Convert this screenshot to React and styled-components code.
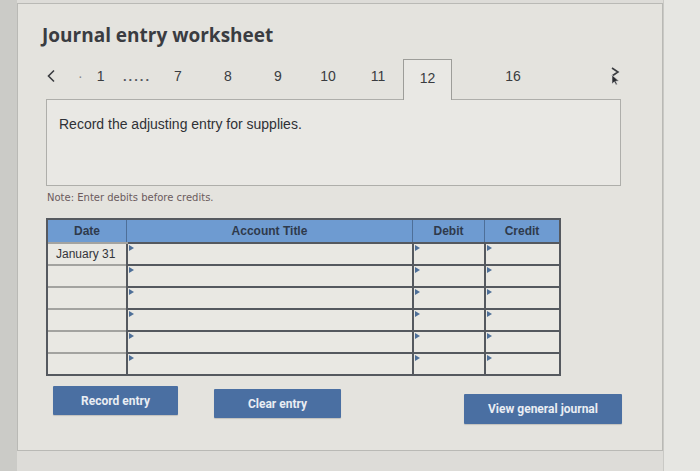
import React from "react";
import styled, { createGlobalStyle } from "styled-components";

const Global = createGlobalStyle`
  html, body { margin: 0; padding: 0; background: #dcdcd8; }
  #root { width: 700px; height: 471px; overflow: hidden; }
`;

const Page = styled.div`
  display: flex;
  width: 700px;
  height: 471px;
  background: #dddcd8;
`;

const LeftStrip = styled.div`
  width: 17px;
  background: #cbcbc7;
  flex-shrink: 0;
`;

const Panel = styled.div`
  width: 646px;
  height: 448px;
  margin-top: 3px;
  box-sizing: border-box;
  border: 1px solid #b9b9b5;
  background: #e4e3de;
  padding: 18px 0 0 24px;
  display: flex;
  flex-direction: column;
  font-family: "Liberation Sans", Arial, sans-serif;
  color: #33353a;
`;

const RightArea = styled.div`
  flex: 1;
  background: #e6e6e2;
  border-left: 1px solid #c9c9c5;
`;

const Title = styled.h1`
  margin: 0;
  font-family: "Open Sans", "DejaVu Sans", sans-serif;
  font-weight: 700;
  font-size: 19px;
  line-height: 26px;
  color: #3a3c41;
`;

const Tabs = styled.div`
  display: flex;
  align-items: stretch;
  height: 40px;
  margin: 11px 0 0 4px;
  width: 575px;
  position: relative;
  z-index: 1;
`;

const Tab = styled.div`
  width: ${(p) => p.$w}px;
  display: flex;
  align-items: center;
  justify-content: ${(p) => p.$justify || "center"};
  padding-bottom: 6px;
  font-size: 14px;
  color: #3a3c40;
  box-sizing: border-box;
  ${(p) =>
    p.$active &&
    `
    border: 1px solid #9d9d99;
    border-bottom: none;
    background: #e9e8e4;
    height: 41px;
    margin-bottom: -1px;
    padding-bottom: 5px;
  `}
`;

const Dots = styled.span`
  letter-spacing: 2px;
  font-weight: 700;
  font-size: 13px;
  color: #55585e;
`;

const Spaced = styled.span`
  display: flex;
  gap: 14px;
  align-items: center;
  padding-left: 12px;
`;

const Box = styled.div`
  width: 575px;
  height: 87px;
  margin-left: 4px;
  box-sizing: border-box;
  border: 1px solid #aeaeaa;
  background: #e9e8e4;
  padding: 16px 12px;
  font-size: 14px;
  color: #2f3136;
`;

const Note = styled.div`
  margin: 6px 0 0 5px;
  font-family: "DejaVu Sans", Verdana, sans-serif;
  font-size: 10px;
  color: #6b5b5d;
`;

const Table = styled.table`
  margin: 15px 0 0 4px;
  border-collapse: collapse;
  width: 515px;
  table-layout: fixed;
  border: 2px solid #55595f;
`;

const Th = styled.th`
  width: ${(p) => p.$w}px;
  height: 22px;
  padding: 0;
  background: #6e9bd1;
  border: 1px solid #4e6f98;
  font-size: 12px;
  font-weight: 700;
  color: #2e3a4c;
`;

const Td = styled.td`
  position: relative;
  height: 20px;
  padding: 0 0 0 8px;
  background: #e9e8e3;
  border-top: 2px solid ${(p) => (p.$date ? "#a3a3a0" : "#55595f")};
  border-left: 2px solid #55595f;
  font-size: 12px;
  color: #33353a;
  ${(p) =>
    p.$flag &&
    `
    &::before {
      content: "";
      position: absolute;
      left: 1px;
      top: 1px;
      border-left: 5px solid #4e6f98;
      border-top: 3px solid transparent;
      border-bottom: 3px solid transparent;
    }
  `}
`;

const Buttons = styled.div`
  display: flex;
  align-items: flex-start;
  margin: 10px 0 0 11px;
`;

const Button = styled.button`
  width: ${(p) => p.$w}px;
  height: ${(p) => p.$h || 29}px;
  margin-left: ${(p) => p.$ml || 0}px;
  margin-top: ${(p) => p.$mt || 0}px;
  border: none;
  border-radius: 1px;
  background: #4a6fa2;
  color: #e9edf3;
  font-family: Roboto, "Liberation Sans", sans-serif;
  font-weight: 700;
  font-size: 12px;
  padding: 0;
  box-shadow: 0 1px 1px rgba(0,0,0,0.15);
`;

const rows = ["January 31", "", "", "", "", ""];

export default function App() {
  return (
    <>
      <Global />
      <Page>
        <LeftStrip />
        <Panel>
          <Title>Journal entry worksheet</Title>
          <Tabs>
            <Tab $w={20} $justify="flex-start">
              <svg width="10" height="14" viewBox="0 0 10 14">
                <path d="M8 1.5 L2.5 7 L8 12.5" fill="none" stroke="#3a3c40" strokeWidth="1.6" />
              </svg>
            </Tab>
            <Tab $w={55} $justify="flex-start">
              <Spaced>
                <span style={{ color: "#888" }}>·</span>
                <span>1</span>
              </Spaced>
            </Tab>
            <Tab $w={32}>
              <Dots>.....</Dots>
            </Tab>
            {["7", "8", "9", "10", "11"].map((n) => (
              <Tab key={n} $w={50}>{n}</Tab>
            ))}
            <Tab $w={49} $active>12</Tab>
            <Tab $w={122}>16</Tab>
            <Tab $w={47} $justify="flex-end">
              <svg width="14" height="20" viewBox="0 0 14 20">
                <path d="M5 2 L11 6 L5 10" fill="none" stroke="#3a3c40" strokeWidth="1.6" />
                <path d="M5 9 L5 18 L7.3 15.8 L9 19 L10.3 18.3 L8.7 15.2 L11.8 15 Z" fill="#2a2c30" stroke="#ddd" strokeWidth="0.6" />
              </svg>
            </Tab>
          </Tabs>
          <Box>Record the adjusting entry for supplies.</Box>
          <Note>Note: Enter debits before credits.</Note>
          <Table>
            <thead>
              <tr>
                <Th $w={78}>Date</Th>
                <Th $w={285}>Account Title</Th>
                <Th $w={71}>Debit</Th>
                <Th $w={74}>Credit</Th>
              </tr>
            </thead>
            <tbody>
              {rows.map((d, i) => (
                <tr key={i}>
                  <Td $date>{d}</Td>
                  <Td $flag />
                  <Td $flag />
                  <Td $flag />
                </tr>
              ))}
            </tbody>
          </Table>
          <Buttons>
            <Button $w={125}>Record entry</Button>
            <Button $w={127} $ml={36} $mt={3}>Clear entry</Button>
            <Button $w={158} $ml={123} $mt={8} $h={30}>View general journal</Button>
          </Buttons>
        </Panel>
        <RightArea />
      </Page>
    </>
  );
}
